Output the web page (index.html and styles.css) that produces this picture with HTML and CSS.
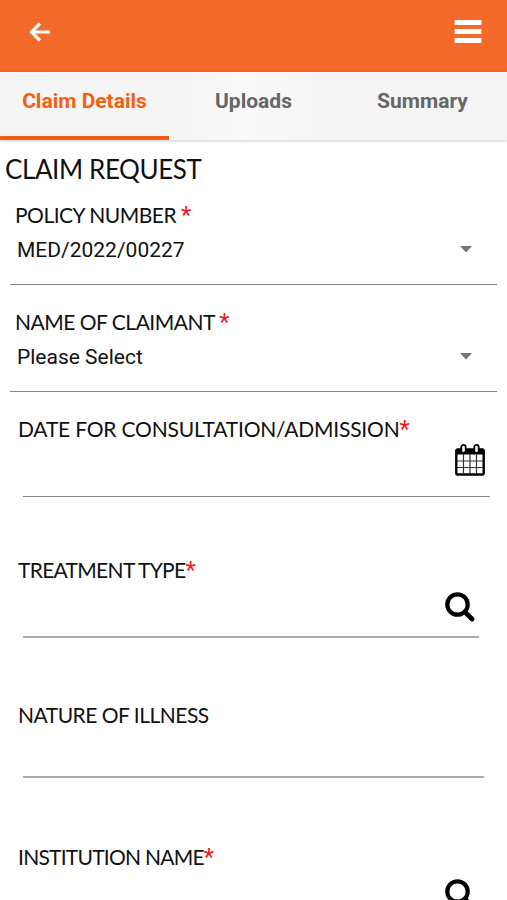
FILE: index.html
```html
<!DOCTYPE html>
<html lang="en">
<head>
    <meta charset="UTF-8">
    <meta name="viewport" content="width=device-width, initial-scale=1.0">
    <title>Claim Request</title>
    <link rel="stylesheet" href="styles.css">
</head>
<body>
    <header class="topbar">
        <svg class="back" viewBox="0 0 22 20" width="22" height="20">
            <path d="M21 10H2.5M11 1.500L2.500 10l8.500 8.500" fill="none" stroke="#fff" stroke-width="3.200"/>
        </svg>
        <svg class="menu" viewBox="0 0 28 24" width="28" height="24">
            <rect x="0.500" y="0" width="27" height="5" rx="1" fill="#fff"/>
            <rect x="0.500" y="9" width="27" height="5" rx="1" fill="#fff"/>
            <rect x="0.500" y="18" width="27" height="5" rx="1" fill="#fff"/>
        </svg>
    </header>

    <nav class="tabs">
        <a class="tab active"><span>Claim Details</span></a>
        <a class="tab"><span>Uploads</span></a>
        <a class="tab"><span>Summary</span></a>
    </nav>

    <main>
        <h1>CLAIM REQUEST</h1>

        <div class="select-field">
            <label>POLICY NUMBER <span class="required">*</span></label>
            <div class="select">
                <span>MED/2022/00227</span>
                <svg viewBox="0 0 12 7" width="12" height="7"><path d="M0 0h12L6 6.500z" fill="#757575"/></svg>
            </div>
        </div>

        <div class="select-field">
            <label>NAME OF CLAIMANT <span class="required">*</span></label>
            <div class="select">
                <span>Please Select</span>
                <svg viewBox="0 0 12 7" width="12" height="7"><path d="M0 0h12L6 6.500z" fill="#757575"/></svg>
            </div>
        </div>

        <div class="field date">
            <label>DATE FOR CONSULTATION/ADMISSION<span class="required">*</span></label>
            <div class="input">
                <svg viewBox="0 0 30 33" width="30" height="33">
                    <rect x="1.300" y="5.500" width="27.400" height="25" rx="1.500" fill="#fff" stroke="#000" stroke-width="2.400"/>
                    <path d="M1 5h28v5.500H1z"/>
                    <path d="M8.500 10v20M15 10v20M21.500 10v20M2 17h26M2 23.500h26" stroke="#333" stroke-width="1.200"/>
                    <rect x="6.300" y="0.900" width="4.400" height="8" rx="2.200" fill="#fff" stroke="#000" stroke-width="1.800"/>
                    <rect x="19.300" y="0.900" width="4.400" height="8" rx="2.200" fill="#fff" stroke="#000" stroke-width="1.800"/>
                </svg>
            </div>
        </div>

        <div class="field treatment">
            <label>TREATMENT TYPE<span class="required">*</span></label>
            <div class="input">
                <svg viewBox="0 0 30 30" width="30" height="30" fill="none" stroke="#000">
                    <circle cx="12.500" cy="12.500" r="10.200" stroke-width="4.200"/>
                    <path d="M20 20l7 7" stroke-width="4.800" stroke-linecap="round"/>
                </svg>
            </div>
        </div>

        <div class="field illness">
            <label>NATURE OF ILLNESS</label>
            <div class="input"></div>
        </div>

        <div class="field institution">
            <label>INSTITUTION NAME<span class="required">*</span></label>
            <div class="input">
                <svg viewBox="0 0 30 30" width="30" height="30" fill="none" stroke="#000">
                    <circle cx="12.500" cy="12.500" r="10.200" stroke-width="4.200"/>
                    <path d="M20 20l7 7" stroke-width="4.800" stroke-linecap="round"/>
                </svg>
            </div>
        </div>
    </main>
</body>
</html>
```
FILE: styles.css
```css
* {
    box-sizing: border-box;
}
body {
    margin: 0;
    height: 900px;
    overflow: hidden;
    background-color: #fff;
    color: #111;
    font-family: Lato, sans-serif;
    font-size: 21px;
}
svg {
    display: block;
    flex-shrink: 0;
}
.topbar {
    display: flex;
    justify-content: space-between;
    align-items: flex-start;
    height: 72px;
    padding: 20px 25px 0 29px;
    background-color: #f46a2a;
}
.back {
    margin-top: 2px;
}
.tabs {
    display: grid;
    grid-template-columns: repeat(3, 1fr);
    height: 68px;
    background: linear-gradient(to right, #f5f5f5 38%, #fafafa 48%, #f5f5f5 62%);
    box-shadow: 0 1px 3px rgba(0, 0, 0, 0.2);
}
.tab {
    padding-top: 14px;
    border-bottom: 4px solid transparent;
    color: #666;
    font: 700 21px/30px Roboto, sans-serif;
    text-align: center;
}
.active {
    border-color: #f45d12;
    color: #f4600f;
}
h1 {
    height: 60px;
    margin: 0;
    padding: 12px 5px 0;
    font-size: 26px;
    font-weight: 400;
    line-height: 34px;
    letter-spacing: -0.4px;
}
label {
    display: block;
    height: 30px;
    line-height: 30px;
    letter-spacing: -0.5px;
    white-space: nowrap;
}
.required {
    color: #f01818;
    font-family: Roboto, sans-serif;
    font-size: 24px;
    line-height: 0;
}
.select-field {
    height: 107px;
    margin: 0 10px;
    padding: 0 0 0 5px;
}
.select {
    display: flex;
    justify-content: space-between;
    height: 50px;
    margin: 5px 0 0 -5px;
    padding: 0 25px 0 7px;
    border-bottom: 1px solid #858585;
    font-family: Roboto, sans-serif;
    line-height: 31px;
}
.select svg {
    margin-top: 11px;
}
.field {
    padding-left: 18px;
}
.input {
    display: flex;
    justify-content: flex-end;
    margin-left: 5px;
    border-bottom: 2px solid #a8acae;
}
.date {
    height: 141px;
}
.date label {
    letter-spacing: -0.2px;
}
.date .input {
    height: 53px;
    margin-right: 17px;
    padding-right: 5px;
    border-bottom: 1px solid #808588;
}
.treatment {
    height: 145px;
}
.treatment label {
    letter-spacing: -0.7px;
}
.treatment .input {
    height: 53px;
    margin-right: 28px;
    padding: 7px 4px 0 0;
}
.illness {
    height: 142px;
}
.illness .input {
    height: 48px;
    margin-right: 23px;
}
.institution label {
    letter-spacing: -0.75px;
}
.institution .input {
    height: 53px;
    margin-right: 28px;
    padding: 7px 4px 0 0;
}
```
